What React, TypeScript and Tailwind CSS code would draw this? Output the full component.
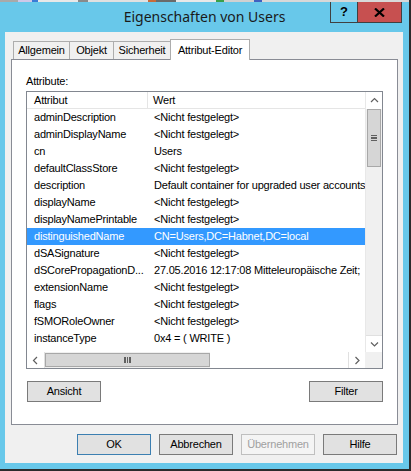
const rows: [string, string][] = [
  ["adminDescription", "<Nicht festgelegt>"],
  ["adminDisplayName", "<Nicht festgelegt>"],
  ["cn", "Users"],
  ["defaultClassStore", "<Nicht festgelegt>"],
  ["description", "Default container for upgraded user accounts"],
  ["displayName", "<Nicht festgelegt>"],
  ["displayNamePrintable", "<Nicht festgelegt>"],
  ["distinguishedName", "CN=Users,DC=Habnet,DC=local"],
  ["dSASignature", "<Nicht festgelegt>"],
  ["dSCorePropagationD...", "27.05.2016 12:17:08 Mitteleuropäische Zeit;"],
  ["extensionName", "<Nicht festgelegt>"],
  ["flags", "<Nicht festgelegt>"],
  ["fSMORoleOwner", "<Nicht festgelegt>"],
  ["instanceType", "0x4 = ( WRITE )"],
];

// tab widths measured off the dialog
const tabs: [string, string][] = [
  ["Allgemein", "w-[57px]"],
  ["Objekt", "w-[45px]"],
  ["Sicherheit", "w-[58px]"],
];

type BtnProps = { label: string; variant?: "normal" | "default" | "disabled" };

const Btn = ({ label, variant = "normal" }: BtnProps) => {
  const look =
    variant === "disabled"
      ? "bg-[#f4f4f4] border-[#bfbfbf] text-[#a0a0a0]"
      : variant === "default"
        ? "bg-[#e1e1e1] border-[#3c7fb1] text-black"
        : "bg-[#e1e1e1] border-[#7a7a7a] text-black";
  return (
    <button type="button" className={`h-[21px] w-[74px] border flex items-center justify-center ${look}`}>
      {label}
    </button>
  );
};

const Chevron = ({ dir }: { dir: "up" | "down" | "left" | "right" }) => {
  const d = {
    up: "M1 5 L4.5 1.5 L8 5",
    down: "M1 1.5 L4.5 5 L8 1.5",
    left: "M5 1 L1.5 4.5 L5 8",
    right: "M1.5 1 L5 4.5 L1.5 8",
  }[dir];
  const horiz = dir === "up" || dir === "down";
  return (
    <svg width={horiz ? 9 : 7} height={horiz ? 7 : 9} viewBox={horiz ? "0 0 9 7" : "0 0 7 9"}>
      <path d={d} fill="none" stroke="#606060" strokeWidth="1.2" />
    </svg>
  );
};

export default function App() {
  return (
    <div
      className="relative w-[411px] h-[471px] bg-[#68c8ea] border-r-2 border-b-2 border-[#2b2b2b] flex flex-col text-[11px] tracking-[-0.2px] text-black"
      style={{ fontFamily: '"Liberation Sans", Arial, sans-serif' }}
    >
      {/* desktop strip behind window */}
      <div className="h-[2px] flex bg-[#d8d8d8]">
        <div className="w-[18px] bg-[#a9a9a9]" />
        <div className="w-[14px] bg-[#cfc8e8]" />
        <div className="w-[6px] bg-[#3a7bd5]" />
        <div className="w-[40px] bg-[#e8e8e8]" />
        <div className="w-[10px] bg-[#8a8a8a]" />
        <div className="w-[60px] bg-[#e0e0e0]" />
        <div className="w-[8px] bg-[#c86a3a]" />
        <div className="w-[20px] bg-[#6a6a6a]" />
        <div className="w-[40px] bg-[#e8e8e8]" />
        <div className="w-[8px] bg-[#3aa04a]" />
        <div className="w-[30px] bg-[#d0d0d0]" />
        <div className="w-[8px] bg-[#4060c0]" />
      </div>

      {/* title bar */}
      <div className="h-[30px] flex items-center justify-center pb-[1px]">
        <span
          className="text-[14px] tracking-normal text-[#1a1a1a]"
          style={{ fontFamily: '"Noto Sans", "Open Sans", sans-serif' }}
        >
          Eigenschaften von Users
        </span>
      </div>
      <div className="absolute top-[2px] left-[330px] flex h-[21px] border border-t-0 border-[#404040]">
        <div className="w-[27px] flex items-center justify-center border-r border-[#404040] font-bold text-[13px] tracking-normal">
          ?
        </div>
        <div className="w-[43px] bg-[#c75050] flex items-center justify-center">
          <svg width="11" height="9" viewBox="0 0 11 9">
            <path d="M1 0.5 L10 8.5 M10 0.5 L1 8.5" stroke="#000" strokeWidth="2.2" />
          </svg>
        </div>
      </div>

      {/* client area */}
      <div className="ml-[5px] mr-[6px] h-[431px] bg-[#f0f0f0] flex flex-col">
        {/* tab row */}
        <div className="mt-[7px] ml-[8px] h-[20px] flex items-end">
          {tabs.map(([t, w]) => (
            <div
              key={t}
              className={`h-[18px] ${w} border border-b-0 border-[#adadad] -mr-px bg-[#f0f0f0] flex items-center justify-center whitespace-nowrap`}
            >
              {t}
            </div>
          ))}
          <div className="relative z-10 h-[21px] w-[80px] -mb-px bg-white border border-b-0 border-[#adadad] flex items-center justify-center whitespace-nowrap">
            Attribut-Editor
          </div>
        </div>

        {/* tab panel */}
        <div className="ml-[6px] w-[387px] h-[366px] bg-white border border-[#898c95] flex flex-col">
          <div className="ml-[14px] mt-[13px] h-[16px] flex items-center">Attribute:</div>

          {/* list view */}
          <div className="ml-[14px] mt-[2px] w-[357px] h-[278px] border border-[#828790] flex flex-col">
            <div className="h-[260px] flex">
              <div className="w-[338px] overflow-hidden flex flex-col">
                <div className="h-[17px] flex border-b border-[#e5e5e5] shrink-0">
                  <div className="w-[121px] pl-[7px] border-r border-[#e5e5e5] flex items-center">Attribut</div>
                  <div className="flex-1 pl-[5px] flex items-center">Wert</div>
                </div>
                {rows.map(([a, v]) => {
                  const sel = a === "distinguishedName";
                  return (
                    <div
                      key={a}
                      className={`h-[17px] shrink-0 flex whitespace-nowrap ${sel ? "bg-[#3399ff] text-white" : ""}`}
                    >
                      <div className="w-[121px] pl-[7px] flex items-center overflow-hidden">{a}</div>
                      <div className="flex-1 pl-[6px] flex items-center overflow-hidden">{v}</div>
                    </div>
                  );
                })}
              </div>
              {/* vertical scrollbar */}
              <div className="w-[17px] bg-[#f0f0f0] flex flex-col border-l border-[#e8e8e8]">
                <div className="h-[17px] flex items-center justify-center bg-white">
                  <Chevron dir="up" />
                </div>
                <div className="h-[58px] mx-px bg-[#d6d6d6] border border-[#a8a8a8] flex flex-col items-center justify-center gap-[1px]">
                  <div className="w-[6px] h-[1.5px] bg-[#606060]" />
                  <div className="w-[6px] h-[1.5px] bg-[#606060]" />
                  <div className="w-[6px] h-[1.5px] bg-[#606060]" />
                </div>
                <div className="flex-1" />
                <div className="h-[17px] flex items-center justify-center bg-white border-t border-[#e0e0e0]">
                  <Chevron dir="down" />
                </div>
              </div>
            </div>
            {/* horizontal scrollbar */}
            <div className="h-[16px] flex bg-[#f0f0f0]">
              <div className="w-[18px] flex items-center justify-center bg-white border-r border-[#e0e0e0]">
                <Chevron dir="left" />
              </div>
              <div className="w-[165px] my-px bg-[#d6d6d6] border border-[#a8a8a8] flex items-center justify-center gap-[1px]">
                <div className="w-[1.5px] h-[6px] bg-[#606060]" />
                <div className="w-[1.5px] h-[6px] bg-[#606060]" />
                <div className="w-[1.5px] h-[6px] bg-[#606060]" />
              </div>
              <div className="flex-1 bg-white" />
              <div className="w-[17px] flex items-center justify-center bg-white border-l border-[#e0e0e0]">
                <Chevron dir="right" />
              </div>
              <div className="w-[17px] bg-[#f0f0f0]" />
            </div>
          </div>

          {/* list buttons */}
          <div className="mt-[12px] ml-[15px] w-[356px] flex justify-between">
            <Btn label="Ansicht" />
            <Btn label="Filter" />
          </div>
        </div>

        {/* dialog buttons */}
        <div className="mt-[9px] mr-[6px] flex justify-end gap-[8px]">
          <Btn label="OK" variant="default" />
          <Btn label="Abbrechen" />
          <Btn label="Übernehmen" variant="disabled" />
          <Btn label="Hilfe" />
        </div>
      </div>
    </div>
  );
}
